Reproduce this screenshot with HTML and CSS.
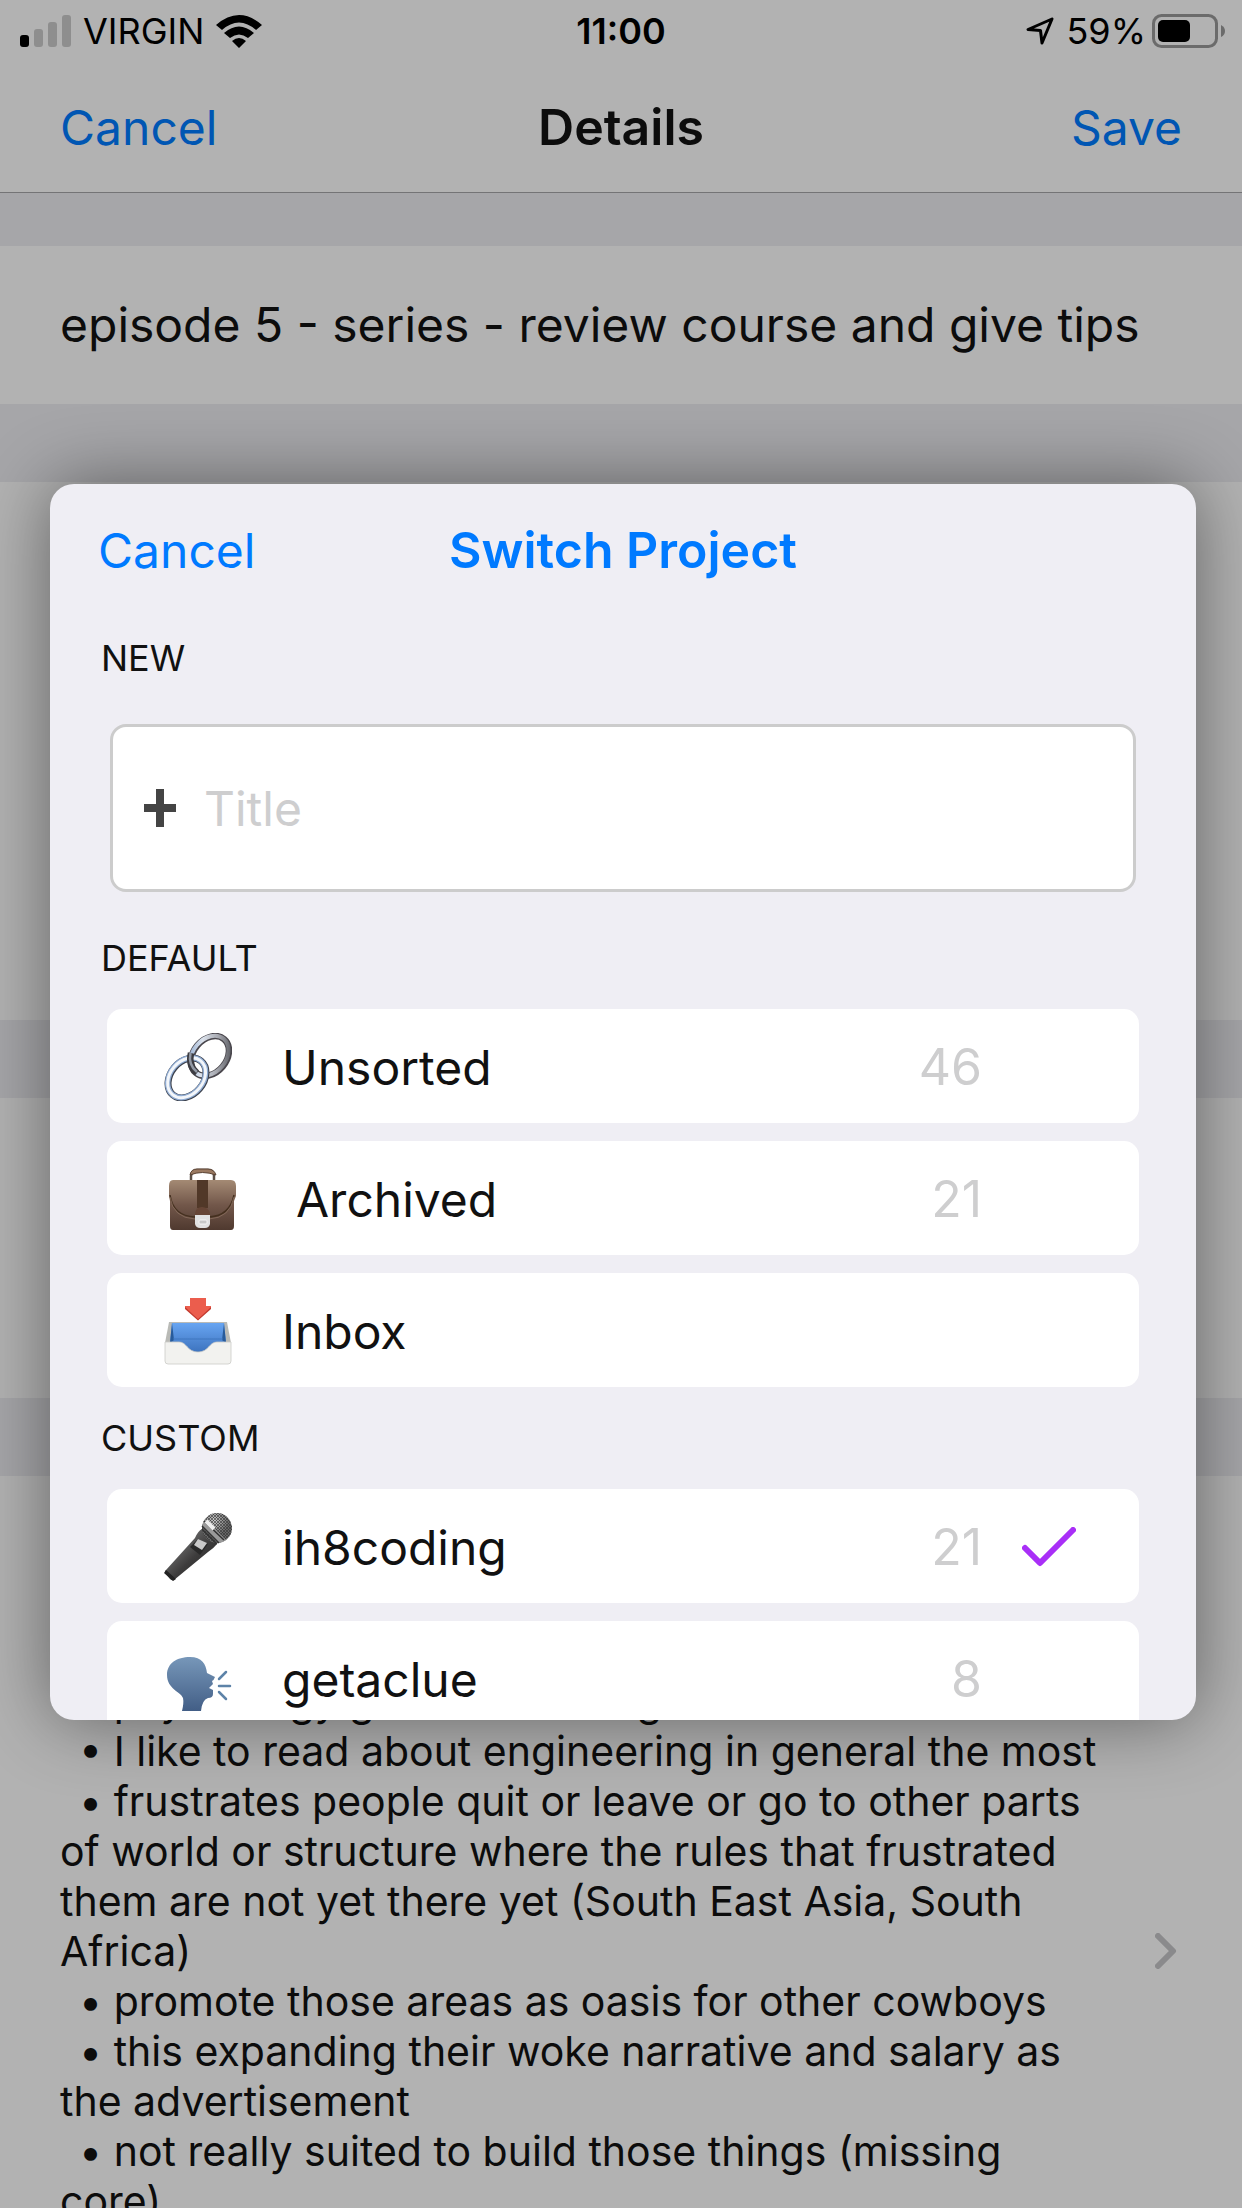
FILE: index.html
```html
<!DOCTYPE html>
<html lang="en">
<head>
<meta charset="utf-8">
<meta name="viewport" content="width=device-width, initial-scale=1">
<title>Details</title>
<link rel="stylesheet" href="styles.css">
</head>
<body>
<div class="page">
  <header class="top">
    <div class="status">
      <div class="status-left">
        <svg class="signal" viewBox="0 0 51 32" aria-hidden="true"><rect y="20" width="9" height="12" rx="3"/><g fill="#8e8e8e"><rect x="14" y="14" width="9" height="18" rx="3"/><rect x="28" y="7" width="9" height="25" rx="3"/><rect x="42" width="9" height="32" rx="3"/></g></svg>
        <span>VIRGIN</span>
        <svg class="wifi" viewBox="0 0 46 33" aria-hidden="true"><path d="M0 10Q23-10 46 10L40 15Q23 0 6 15ZM8 18Q23 5 38 18L32 23Q23 16 14 23ZM16 26Q23 20 30 26L23 33Z"/></svg>
      </div>
      <span class="clock">11:00</span>
      <div class="status-right">
        <svg class="locate" viewBox="0 0 28 28" aria-hidden="true"><path d="M26 2 2 12.500 14.500 13.500 16 26Z" fill="none" stroke="#000" stroke-width="3" stroke-linejoin="round"/></svg>
        <span>59%</span>
        <svg class="battery" viewBox="0 0 74 34" aria-hidden="true"><rect x="1.500" y="1.500" width="63" height="31" rx="8" fill="none" stroke="#6b6b6b" stroke-width="3"/><rect x="6" y="6" width="32" height="22" rx="5"/><path d="M69 11q4 2 4 6t-4 6Z" fill="#6b6b6b"/></svg>
      </div>
    </div>
    <nav class="navbar">
      <button class="link" type="button">Cancel</button>
      <h1 class="title">Details</h1>
      <button class="link" type="button">Save</button>
    </nav>
  </header>
  <main class="form">
    <section class="cell cell-name">episode 5 - series - review course and give tips</section>
    <section class="cell cell-tall"></section>
    <section class="cell cell-mid"></section>
    <section class="cell cell-notes">
      <div class="notes"><p>  • psychology goes to learning</p><p>  • I like to read about engineering in general the most</p><p>  • frustrates people quit or leave or go to other parts of world or structure where the rules that frustrated them are not yet there yet (South East Asia, South Africa)</p><p>  • promote those areas as oasis for other cowboys</p><p>  • this expanding their woke narrative and salary as the advertisement</p><p>  • not really suited to build those things (missing core)</p></div>
      <svg class="chevron" viewBox="0 0 22 36" aria-hidden="true"><path d="M3 3 18 18 3 33" fill="none" stroke="#8a8a8c" stroke-width="6" stroke-linecap="round" stroke-linejoin="round"/></svg>
    </section>
  </main>
</div>

<div class="dialog" role="dialog" aria-labelledby="dialog-title">
  <div class="dialog-bar">
    <button class="link" type="button">Cancel</button>
    <h2 class="dialog-title" id="dialog-title">Switch Project</h2>
  </div>
  <h3 class="group">NEW</h3>
  <label class="field">
    <svg class="plus" viewBox="0 0 32 38" aria-hidden="true"><path d="M12 0h8v15h12v8H20v15h-8V23H0v-8h12Z" fill="#444"/></svg>
    <input class="field-input" type="text" placeholder="Title" aria-label="Title">
  </label>
  <h3 class="group">DEFAULT</h3>
  <ul class="list">
    <li><button class="row" type="button">
      <svg class="emoji" viewBox="0 0 68 68" aria-hidden="true"><defs><linearGradient id="steel" x1="0" y1="0" x2="1" y2="1"><stop offset="0" stop-color="#7d9cc8"/><stop offset=".35" stop-color="#dbe2ec"/><stop offset=".65" stop-color="#a5a7ae"/><stop offset="1" stop-color="#45464c"/></linearGradient></defs><g fill="none"><g transform="rotate(-50 46 23)"><ellipse cx="46" cy="23" rx="22" ry="16.500" stroke="#4a474d" stroke-width="6.500"/><ellipse cx="46" cy="22.500" rx="22" ry="16.500" stroke="url(#steel)" stroke-width="4"/></g><g transform="rotate(-50 23 45)"><ellipse cx="23" cy="45" rx="22" ry="16.500" stroke="#3d424d" stroke-width="7"/><ellipse cx="23" cy="44.500" rx="22" ry="16.500" stroke="#8fabd2" stroke-width="5.500"/><ellipse cx="23" cy="44.500" rx="22" ry="16.500" stroke="#f3f6fa" stroke-width="3"/></g><path d="M33 40Q24 33 27 20" stroke="#3c3c42" stroke-width="6.500"/><path d="M33 39Q24 32 26.500 20" stroke="#9299a5" stroke-width="2.500"/></g></svg>
      <span class="name">Unsorted</span><span class="count">46</span><span class="mark"></span></button></li>
    <li><button class="row" type="button">
      <svg class="emoji emoji-wide" viewBox="0 0 68 68" aria-hidden="true"><defs><linearGradient id="hide" x1="0" y1="0" x2="0" y2="1"><stop offset="0" stop-color="#a48a74"/><stop offset=".5" stop-color="#72574a"/><stop offset="1" stop-color="#4f392f"/></linearGradient></defs><path d="M23 17V11Q24 5 29 5H40Q46 5 46 11V17" fill="none" stroke="#5c5047" stroke-width="2.500"/><path d="M22 10Q23 4 29 4H40Q46 4 48 10Q34 5 22 10Z" fill="#9a7961" stroke="#5a4334"/><path d="M5 15H63Q68 15 68 21V31L66 36V61Q66 65 63 65H5Q2 65 2 61V36L1 31V21Q1 15 5 15Z" fill="url(#hide)"/><path d="M2 30Q5 51 27 52H41Q62 51 66 30" fill="none" stroke="#45301f" stroke-width="1.500"/><path d="M2 32Q5 53 27 54H41Q62 53 66 32" fill="none" stroke="#917564" stroke-width=".7"/><path d="M29 15H40V43H29Z" fill="#513828"/><path d="M27 51V48Q28 42 34 42T42 48V51Z" fill="#664536"/><path d="M27 50H42V59Q41 63 37 63H32Q28 63 27 59Z" fill="#e1e1e1"/><rect x="31" y="55" width="8" height="4" rx="1" fill="#c8c8c8" stroke="#f5f5f5"/></svg>
      <span class="name name-in">Archived</span><span class="count">21</span><span class="mark"></span></button></li>
    <li><button class="row" type="button">
      <svg class="emoji" viewBox="0 0 68 68" aria-hidden="true"><defs><linearGradient id="tray" x1="0" y1="0" x2="0" y2="1"><stop offset="0" stop-color="#68a5f2"/><stop offset="1" stop-color="#3c72bd"/></linearGradient></defs><path d="M5 25H63L67 46H1Z" fill="#b9bab6"/><path d="M8 26H60L62 45 45 56H24L6 45Z" fill="url(#tray)"/><path d="M8 26 10 43 6 46ZM60 26 58 43 62 46Z" fill="#285b9a"/><path d="M9 42H59" stroke="#3e76bf"/><path d="M1 45H15C23 45 23 55 34 55S45 45 53 45H67V64Q67 67 64 67H4Q1 67 1 64Z" fill="#f2f2ef" stroke="#ccccc8" stroke-width=".8"/><path d="M26 1H42V9H47V11L34 23 21 11V9H26Z" fill="#eb5d4d"/><path d="M21 10 34 22 47 10V12L34 23.500 21 12Z" fill="#c33b2f"/></svg>
      <span class="name">Inbox</span><span class="count"></span><span class="mark"></span></button></li>
  </ul>
  <h3 class="group group-next">CUSTOM</h3>
  <ul class="list">
    <li><button class="row" type="button" aria-pressed="true">
      <svg class="emoji" viewBox="0 0 68 68" aria-hidden="true"><defs><linearGradient id="grip" x1="0" y1="0" x2="1" y2="1"><stop offset=".2" stop-color="#777"/><stop offset=".55" stop-color="#3d3c3c"/><stop offset="1" stop-color="#222"/></linearGradient><radialGradient id="ball" cx=".4" cy=".25"><stop offset="0" stop-color="#ccc"/><stop offset="1" stop-color="#666"/></radialGradient><pattern id="mesh" width="3" height="3" patternUnits="userSpaceOnUse"><path d="M0 0 3 3M3 0 0 3" stroke="#333" stroke-width=".6"/></pattern></defs><path d="M38 16 53 31 Q50 35 44 39L10 67Q8 68 6 66L2 61Q0 59 2 57L31 25Q34 18 38 16Z" fill="url(#grip)"/><path d="M2 57 12 66 9 68 0 60Z" fill="#222"/><circle cx="53" cy="15" r="15" fill="url(#ball)"/><circle cx="53" cy="15" r="15" fill="url(#mesh)"/><path d="M41 6 62 27Q57 31 53 29L39 15Q37 11 41 6Z" fill="#999"/><path d="M40 8 60 27M38 16 53 31M38 13 55 30" stroke="#333" stroke-width="1.500"/><path d="M42 8 50 16" stroke="#eee" stroke-width="4"/><path d="M34 26 44 31 36 42 26 34Z" fill="#292929"/><path d="M34 26 43 30 38 37 30 32Z" fill="#c9c9c9"/></svg>
      <span class="name">ih8coding</span><span class="count">21</span><span class="mark"><svg class="check" viewBox="0 0 54 40" aria-hidden="true"><path d="M3 21 18 36 51 3" fill="none" stroke="#a92ff7" stroke-width="6" stroke-linecap="round" stroke-linejoin="round"/></svg></span></button></li>
    <li><button class="row" type="button">
      <svg class="emoji" viewBox="0 0 68 68" aria-hidden="true"><defs><linearGradient id="head" x1="0" y1="0" x2="0" y2="1"><stop offset="0" stop-color="#7797b9"/><stop offset="1" stop-color="#425e86"/></linearGradient></defs><path d="M18 66Q20 58 19 53C17 47 3 44 3 30C3 18 13 12 26 12C38 12 42 19 43 28L51 32Q50 35 48 36L49 39 45 43 49 45V49Q49 53 44 53Q38 55 37 66Z" fill="url(#head)"/><path d="M55 34 62 27M55 41H66M55 47 62 54" stroke="#5d83a8" stroke-width="2.500" stroke-linecap="round"/></svg>
      <span class="name">getaclue</span><span class="count">8</span><span class="mark"></span></button></li>
  </ul>
</div>
</body>
</html>
```

FILE: styles.css
```css
* {
  box-sizing: border-box;
}

body {
  margin: 0;
  height: 100vh;
  overflow: hidden;
  background: #b2b2b2;
  color: #0c0c0c;
  font-family: Inter, "Liberation Sans", sans-serif;
  font-size: 48px;
}

h1, h2, h3, p, ul {
  margin: 0;
  padding: 0;
  list-style: none;
}

button {
  margin: 0;
  padding: 0;
  border: 0;
  background: none;
  color: inherit;
  font: inherit;
}

svg {
  display: block;
  flex: none;
}

.page {
  height: 100vh;
  overflow: hidden;
}

.top {
  border-bottom: 1px solid #747476;
}

.status {
  display: grid;
  grid-template-columns: 1fr auto 1fr;
  align-items: center;
  height: 62px;
  padding: 0 16px;
  color: #000;
  font-size: 36px;
}

.status-left,
.status-right {
  display: flex;
  align-items: center;
}

.status-left {
  gap: 12px;
  padding-left: 4px;
}

.status-right {
  justify-content: flex-end;
  gap: 6px;
}

.clock {
  font-weight: 600;
}

.signal {
  width: 51px;
  height: 32px;
}

.wifi {
  width: 46px;
  height: 33px;
}

.locate {
  width: 28px;
  height: 28px;
  margin-right: 6px;
}

.battery {
  width: 74px;
  height: 34px;
}

.navbar {
  display: grid;
  grid-template-columns: 1fr auto 1fr;
  align-items: center;
  height: 130px;
  padding: 0 60px;
}

.link {
  justify-self: start;
  color: #0056b3;
}

.link:last-child {
  justify-self: end;
}

.title {
  font-size: 50px;
  font-weight: 600;
}

.form {
  display: flex;
  flex-direction: column;
  gap: 78px;
  padding-top: 53px;
  background: #a6a6a9;
}

.cell {
  background: #b2b2b2;
}

.cell-name {
  padding: 0 60px;
  line-height: 158px;
  white-space: nowrap;
}

.cell-tall {
  height: 538px;
}

.cell-mid {
  height: 300px;
}

.cell-notes {
  display: flex;
  align-items: center;
  justify-content: space-between;
  height: 950px;
  padding: 0 65px 0 60px;
}

.notes {
  flex: 0 1 1050px;
  font-size: 41px;
  line-height: 50px;
  text-indent: -4px;
  white-space: pre-wrap;
}

.chevron {
  width: 22px;
  height: 36px;
}

.dialog {
  position: absolute;
  top: 484px;
  left: 50px;
  right: 46px;
  height: 1236px;
  overflow: hidden;
  border-radius: 24px;
  background: #efeef4;
  box-shadow: 0 0 72px rgba(0, 0, 0, 0.45);
  color: #111;
}

.dialog-bar {
  display: grid;
  grid-template-columns: 1fr auto 1fr;
  align-items: center;
  height: 132px;
  padding: 0 48px;
}

.dialog-bar .link,
.dialog-title {
  color: #007aff;
}

.dialog-title {
  font-size: 50px;
  font-weight: 600;
}

.group {
  padding: 0 51px;
  font-size: 36px;
  font-weight: 400;
  line-height: 84px;
}

.group-next {
  margin-top: 9px;
}

.field {
  display: flex;
  align-items: center;
  gap: 28px;
  height: 168px;
  margin: 24px 60px;
  padding: 0 31px;
  border: 3px solid #ccc;
  border-radius: 16px;
  background: #fff;
}

.plus {
  width: 32px;
  height: 38px;
}

.field-input {
  flex: 1;
  min-width: 0;
  padding: 0;
  border: 0;
  outline: 0;
  background: none;
  font: inherit;
}

.field-input::placeholder {
  color: #cececf;
  opacity: 1;
}

.list {
  display: flex;
  flex-direction: column;
  gap: 18px;
  padding: 9px 57px 0;
}

.row {
  display: flex;
  align-items: center;
  width: 100%;
  height: 114px;
  padding: 2px 63px 0 57px;
  border-radius: 15px;
  background: #fff;
  text-align: left;
}

.emoji {
  width: 68px;
  height: 68px;
  margin-right: 50px;
}

.emoji-wide {
  margin: 0 46px 0 4px;
}

.name {
  flex: 1;
}

.name-in {
  padding-left: 14px;
}

.count {
  color: #cececf;
  font-size: 50px;
}

.mark {
  display: flex;
  justify-content: flex-end;
  width: 94px;
}

.check {
  width: 54px;
  height: 40px;
}
```
